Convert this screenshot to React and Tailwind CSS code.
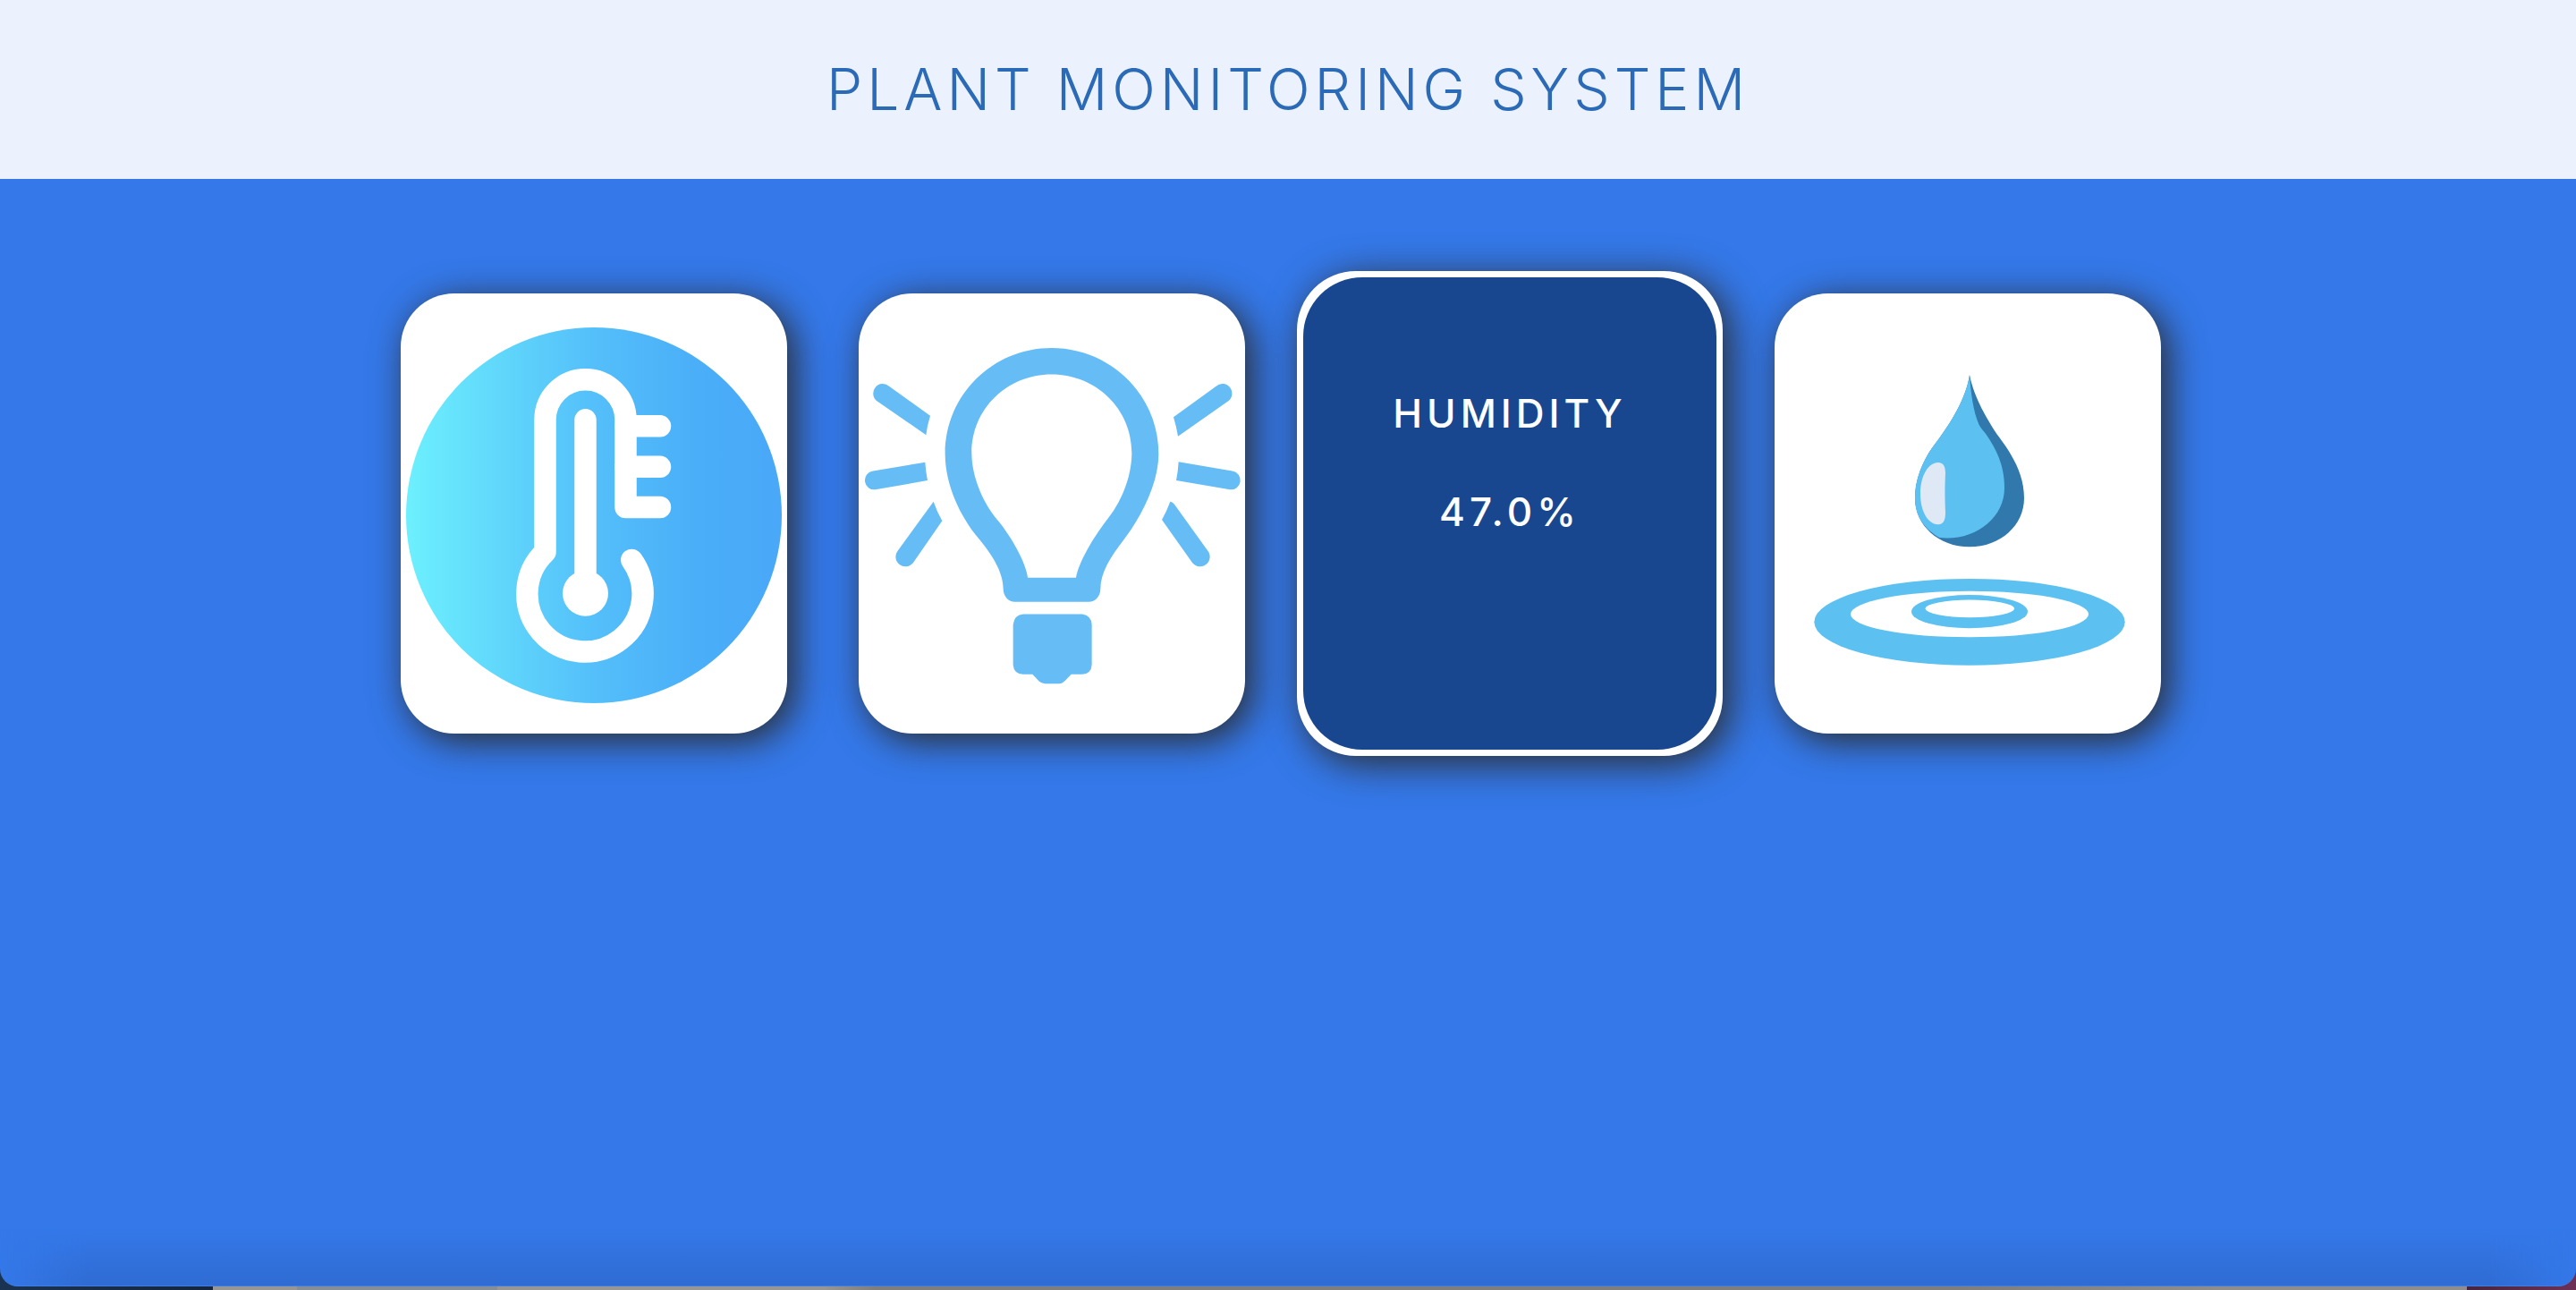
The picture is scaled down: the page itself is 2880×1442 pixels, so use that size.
function ThermometerIcon() {
  return (
    <svg viewBox="0 0 432 492" className="block size-full" role="img" aria-label="Temperature">
      <defs>
        <linearGradient id="sky" x1="0" x2="1" y1="0" y2="0">
          <stop offset="0" stopColor="#6df0fe" />
          <stop offset="0.33" stopColor="#5ccffa" />
          <stop offset="0.5" stopColor="#54bffa" />
          <stop offset="0.78" stopColor="#4aaef8" />
          <stop offset="1" stopColor="#49a8f8" />
        </linearGradient>
      </defs>
      <circle cx="216" cy="248" r="210" fill="url(#sky)" />
      <g fill="none" stroke="#fff" strokeWidth="24.5" strokeLinecap="round" strokeLinejoin="round">
        <path d="M290 239 H251.5 V141.3 a45 45 0 0 0 -90 0 V289 A64.6 64.6 0 1 0 258.3 298" />
        <path d="M251.5 148.3 H290 M251.5 193.8 H290" />
        <path d="M206.5 141.3 V335" />
      </g>
      <circle cx="206.5" cy="335.3" r="25.5" fill="#fff" />
    </svg>
  );
}

function BulbIcon() {
  return (
    <svg
      viewBox="60 77 1296 1353"
      preserveAspectRatio="none"
      className="block size-full"
      role="img"
      aria-label="Light"
      fill="#66bdf6"
    >
      <path
        fillRule="evenodd"
        d="M707 245 C905 245 1066 390 1066 570 C1066 660 1010 760 950 833 C905 886 871 935 871 985 C871 1008 853 1025 832 1025 H584 C563 1025 545 1008 545 985 C545 935 508 880 462 830 C400 762 350 665 350 570 C350 390 509 245 707 245Z
           M707 326 C558 326 439 432 439 567 C439 640 477 722 528 776 C570 822 622 905 627 951 H789 C797 905 845 830 890 776 C941 720 976 640 976 567 C976 432 856 326 707 326Z"
      />
      <path d="M612 1063 H810 Q840 1067 842 1095 V1218 Q840 1246 810 1248 H773 L752 1268 Q742 1277 732 1277 H686 Q674 1276 665 1269 L643 1248 H612 Q580 1246 578 1218 V1095 Q582 1065 612 1063Z" />
      <path d="M300 453 L162 362 A31 28.5 0 0 0 120 407 L286 512 Q290 483 300 453Z" />
      <path d="M283 596 L108 623 A31 28.5 0 0 0 116 680 L291 652 Q285 626 283 596Z" />
      <path d="M311 717 L191 868 A31 28.5 0 0 0 243 905 L340 776 Q323 749 311 717Z" />
      <path d="M1116 457 L1259 362 A31 28.5 0 0 1 1301 407 L1131 516 Q1126 487 1116 457Z" />
      <path d="M1133 595 L1313 623 A31 28.5 0 0 1 1305 680 L1125 652 Q1131 625 1133 595Z" />
      <path d="M1105 717 Q1112 717 1120 727 L1231 868 A31 28.5 0 0 1 1179 905 L1077 773 Q1093 747 1105 717Z" />
    </svg>
  );
}

function WaterIcon() {
  return (
    <svg
      viewBox="72 77 1296 1353"
      preserveAspectRatio="none"
      className="block size-full"
      role="img"
      aria-label="Soil moisture"
    >
      <path
        fill="#3178ad"
        d="M726 327 C740 395 786 467 826 520 C872 577 909 635 909 706 C909 790 830 856 726 856 C622 856 543 790 543 706 C543 645 572 583 618 530 C660 478 715 400 726 327Z"
      />
      <path
        fill="#5cc0f1"
        d="M726 327 C730 380 738 440 758 481 C764 492 774 500 782 511 C820 562 843 610 843 675 C843 770 740 840 625 828 C576 800 543 765 543 706 C543 645 572 583 618 530 C660 478 715 400 726 327Z"
      />
      <path
        fill="#dfe9f6"
        d="M620 597 C640 597 645 612 645 630 C643 670 643 700 645 750 C645 772 640 787 620 787 C585 785 561 745 561 692 C561 635 590 597 620 597Z"
      />
      <ellipse cx="726" cy="1087" rx="521" ry="133" fill="#5cc0f1" />
      <ellipse cx="726" cy="1063" rx="399" ry="71" fill="#fff" />
      <ellipse cx="726" cy="1055" rx="195" ry="51" fill="#5cc0f1" />
      <ellipse cx="727" cy="1046" rx="149" ry="27" fill="#fff" />
    </svg>
  );
}

function IconCard({ children }) {
  return (
    <article className="h-[492px] w-[432px] overflow-hidden rounded-[60px] bg-white shadow-[8px_8px_40px_#2b2b2b]">
      {children}
    </article>
  );
}

function ReadingCard({ title, value }) {
  return (
    <article className="flex h-[492px] w-[432px] items-center justify-center">
      <div className="h-[542px] w-[476px] shrink-0 rounded-[66px] bg-white p-[7px] shadow-[8px_8px_44px_#2b2b2b]">
        <div className="flex h-full flex-col items-center gap-[58px] rounded-[66px] bg-[#19478f] pt-[126px] text-[44px] leading-[52px] font-medium tracking-[5px] text-white">
          <h2>{title}</h2>
          <p>{value}</p>
        </div>
      </div>
    </article>
  );
}

export default function App() {
  return (
    <div className="flex min-h-screen flex-col bg-[linear-gradient(90deg,#1a3353_0,#14263f_238px,#989694_238px,#989694_332px,#858d96_332px,#858d96_556px,#989694_556px,#989694_32%,#7f7e7d_34%,#7f7e7d_76%,#8e8d8c_calc(100%-400px),#8e8d8c_calc(100%-122px),#46243f_calc(100%-122px),#6d3156_100%)] pb-1 font-['Inter','Liberation_Sans',sans-serif]">
      <header className="flex h-[200px] items-center justify-center bg-[#ebf1fd]">
        <h1 className="text-[64px] leading-[76px] font-light tracking-[5px] text-[#2a6ab6]">
          PLANT MONITORING SYSTEM
        </h1>
      </header>
      <main className="flex flex-1 flex-col justify-between overflow-hidden rounded-b-[20px] border-b border-[#3f7fe4] bg-[#3478e9] pt-32">
        <section className="flex flex-wrap justify-center gap-20 pr-4">
          <IconCard>
            <ThermometerIcon />
          </IconCard>
          <IconCard>
            <BulbIcon />
          </IconCard>
          <ReadingCard title="HUMIDITY" value="47.0%" />
          <IconCard>
            <WaterIcon />
          </IconCard>
        </section>
        <div
          aria-hidden="true"
          className="h-16 bg-linear-to-b from-[#3478e9] to-[#2f6bd2] [mask-image:linear-gradient(90deg,transparent,black_100px,black_calc(100%-100px),transparent)]"
        />
      </main>
    </div>
  );
}
